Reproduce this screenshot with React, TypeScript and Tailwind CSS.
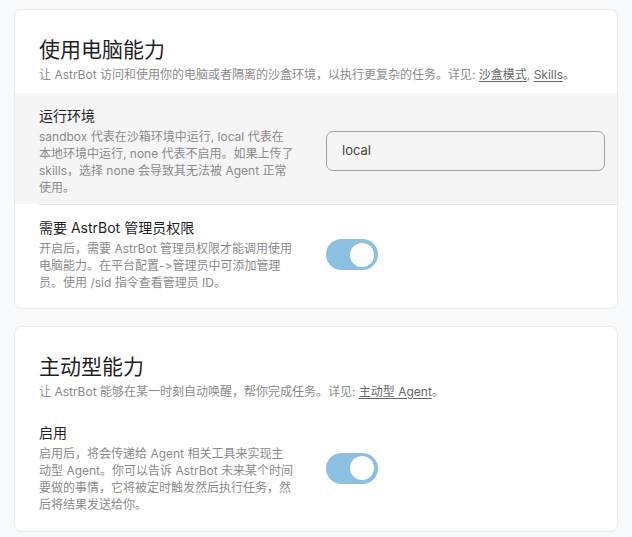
import React from "react";

const font = { fontFamily: '"Inter", "Noto Sans CJK SC", sans-serif' };

function Toggle() {
  return (
    <div className="relative h-[31px] w-[52px] rounded-full bg-[#8cc0e0]">
      <div className="absolute right-[4px] top-[3.5px] h-[24px] w-[24px] rounded-full bg-white" />
    </div>
  );
}

function Row({
  label,
  lines,
  control,
  gray,
}: {
  label: string;
  lines: string[];
  control: React.ReactNode;
  gray?: boolean;
}) {
  return (
    <div className={`flex items-center pl-[24px] pt-[13px] pb-[8px] ${gray ? "bg-[#f5f5f5]" : ""}`}>
      <div className="w-[272px] shrink-0">
        <div className="text-[14px] leading-[20px] text-[#1f1f1f]">{label}</div>
        <div className="mt-[2px] text-[12px] leading-[17px] text-[#8a8a8a] whitespace-nowrap">
          {lines.map((l, i) => (
            <div key={i}>{l}</div>
          ))}
        </div>
      </div>
      <div className="ml-[15px] flex-1 pr-[17px]">{control}</div>
    </div>
  );
}

export default function App() {
  return (
    <div
      className="min-h-[537px] bg-[#f8f9fa] px-[14px] pt-[9px] [font-feature-settings:'calt'_0,'liga'_0]"
      style={font}
    >
      <div className="overflow-hidden rounded-[8px] border border-[#ececec] bg-white pb-[9px]">
        <div className="px-[24px] pt-[26px]">
          <div className="text-[21px] leading-[28px] text-[#1f1f1f]">使用电脑能力</div>
          <div className="mt-[3px] text-[12px] leading-[16px] text-[#8a8a8a]">
            让 AstrBot 访问和使用你的电脑或者隔离的沙盒环境，以执行更复杂的任务。详见:{" "}
            <span className="text-[#666] underline underline-offset-2">沙盒模式</span>,{" "}
            <span className="text-[#666] underline underline-offset-2">Skills</span>。
          </div>
        </div>
        <div className="mt-[10px]">
          <Row
            gray
            label="运行环境"
            lines={[
              "sandbox 代表在沙箱环境中运行, local 代表在",
              "本地环境中运行, none 代表不启用。如果上传了",
              "skills，选择 none 会导致其无法被 Agent 正常",
              "使用。",
            ]}
            control={
              <div className="flex h-[40px] w-[279px] items-center rounded-[7px] border border-[#a0a0a0] px-[15px] text-[13px] text-[#444]">
                local
              </div>
            }
          />
          <div className="ml-[24px] h-px bg-[#e6e6e6]" />
          <Row
            label="需要 AstrBot 管理员权限"
            lines={[
              "开启后，需要 AstrBot 管理员权限才能调用使用",
              "电脑能力。在平台配置->管理员中可添加管理",
              "员。使用 /sid 指令查看管理员 ID。",
            ]}
            control={<Toggle />}
          />
        </div>
      </div>

      <div className="mt-[17px] overflow-hidden rounded-[8px] border border-[#ececec] bg-white pb-[10px]">
        <div className="px-[24px] pt-[26px]">
          <div className="text-[21px] leading-[28px] text-[#1f1f1f]">主动型能力</div>
          <div className="mt-[3px] text-[12px] leading-[16px] text-[#8a8a8a]">
            让 AstrBot 能够在某一时刻自动唤醒，帮你完成任务。详见:{" "}
            <span className="text-[#666] underline underline-offset-2">主动型 Agent</span>。
          </div>
        </div>
        <div className="mt-[10px]">
          <Row
            label="启用"
            lines={[
              "启用后，将会传递给 Agent 相关工具来实现主",
              "动型 Agent。你可以告诉 AstrBot 未来某个时间",
              "要做的事情，它将被定时触发然后执行任务，然",
              "后将结果发送给你。",
            ]}
            control={<Toggle />}
          />
        </div>
      </div>
    </div>
  );
}
